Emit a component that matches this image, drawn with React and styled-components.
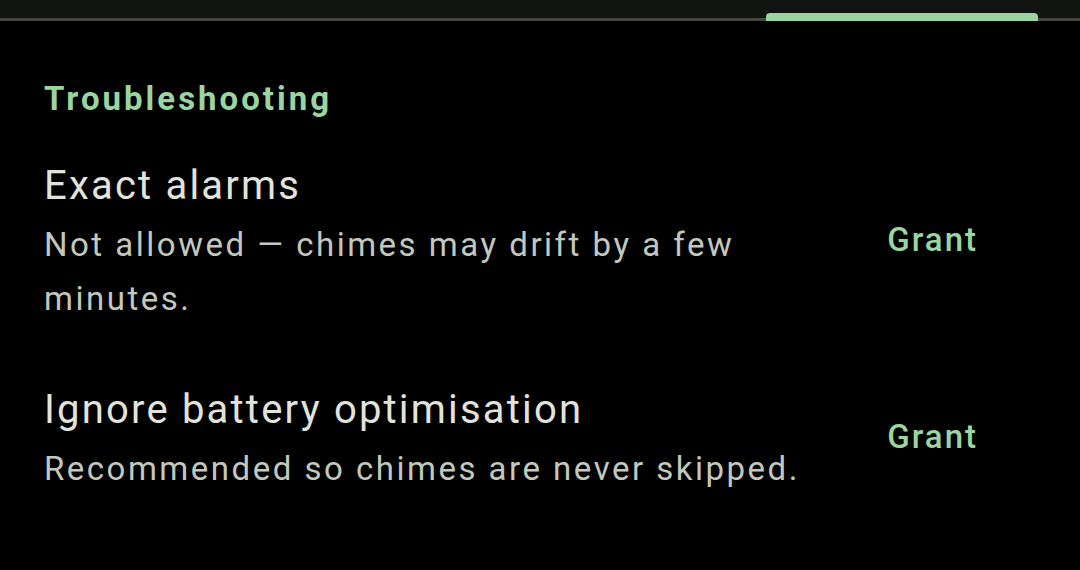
import React from "react";
import styled, { createGlobalStyle } from "styled-components";

const GlobalStyle = createGlobalStyle`
  html, body {
    margin: 0;
    padding: 0;
    background: #000;
  }
  body {
    font-family: Roboto, "Noto Sans", sans-serif;
    -webkit-font-smoothing: antialiased;
  }
`;

const Screen = styled.div`
  width: 1080px;
  height: 570px;
  background: #000;
  overflow: hidden;
`;

const TabBar = styled.div`
  height: 21px;
  display: flex;
  align-items: flex-end;
  background: linear-gradient(to bottom, #111410 0, #111410 18px, #44483f 18px);
`;

const TabIndicator = styled.div`
  width: 272px;
  height: 8px;
  margin-left: 766px;
  background: #9ad4a0;
  border-radius: 4px 4px 0 0;
`;

const Section = styled.section`
  padding: 58px 0 0 44px;
`;

const SectionHeader = styled.h3`
  margin: 0 0 13px;
  font-size: 33px;
  line-height: 40px;
  font-weight: 700;
  letter-spacing: 3px;
  color: #9ad4a0;
`;

const Row = styled.div`
  display: flex;
  align-items: center;
  padding: 30px 102px 30px 0;
`;

const RowText = styled.div`
  flex: 1;
  min-width: 0;
  padding-right: 48px;
`;

const Title = styled.div`
  font-size: 40px;
  line-height: 48px;
  letter-spacing: 2.2px;
  color: #e1e3dc;
`;

const Summary = styled.div`
  margin-top: 8px;
  font-size: 33px;
  line-height: 54px;
  letter-spacing: 2.5px;
  color: #c2c8bd;
`;

const GrantButton = styled.button`
  background: none;
  border: none;
  padding: 0;
  margin-bottom: 9px;
  font-family: Roboto, "Noto Sans", sans-serif;
  font-size: 33px;
  line-height: 40px;
  font-weight: 500;
  letter-spacing: 2px;
  color: #9ad4a0;
  cursor: pointer;
`;

const items = [
  {
    title: "Exact alarms",
    summary: "Not allowed — chimes may drift by a few minutes.",
  },
  {
    title: "Ignore battery optimisation",
    summary: "Recommended so chimes are never skipped.",
  },
];

export default function App() {
  return (
    <Screen>
      <GlobalStyle />
      <TabBar>
        <TabIndicator />
      </TabBar>
      <Section>
        <SectionHeader>Troubleshooting</SectionHeader>
        {items.map((it) => (
          <Row key={it.title}>
            <RowText>
              <Title>{it.title}</Title>
              <Summary>{it.summary}</Summary>
            </RowText>
            <GrantButton>Grant</GrantButton>
          </Row>
        ))}
      </Section>
    </Screen>
  );
}
